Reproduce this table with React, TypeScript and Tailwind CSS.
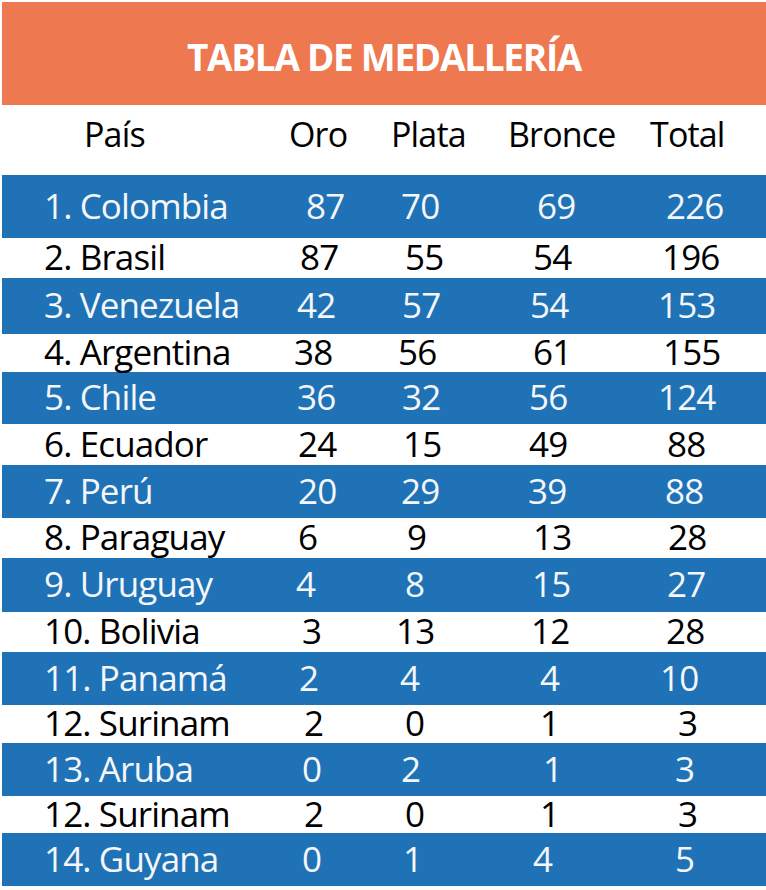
type Row = {
  name: string;
  h: number;
  cells: [string, number][];
};

// x positions measured from the left of the page for each number
const rows: Row[] = [
  { name: '1. Colombia', h: 63, cells: [['87', 306], ['70', 401], ['69', 537], ['226', 666]] },
  { name: '2. Brasil', h: 40, cells: [['87', 300], ['55', 405], ['54', 533], ['196', 662]] },
  { name: '3. Venezuela', h: 56, cells: [['42', 297], ['57', 402], ['54', 530], ['153', 658]] },
  { name: '4. Argentina', h: 38, cells: [['38', 294], ['56', 398], ['61', 533], ['155', 663]] },
  { name: '5. Chile', h: 52, cells: [['36', 297], ['32', 402], ['56', 529], ['124', 658]] },
  { name: '6. Ecuador', h: 41, cells: [['24', 298], ['15', 403], ['49', 529], ['88', 667]] },
  { name: '7. Perú', h: 53, cells: [['20', 298], ['29', 401], ['39', 528], ['88', 665]] },
  { name: '8. Paraguay', h: 40, cells: [['6', 298], ['9', 407], ['13', 533], ['28', 668]] },
  { name: '9. Uruguay', h: 54, cells: [['4', 296], ['8', 405], ['15', 532], ['27', 667]] },
  { name: '10. Bolivia', h: 40, cells: [['3', 302], ['13', 396], ['12', 531], ['28', 666]] },
  { name: '11. Panamá', h: 53, cells: [['2', 299], ['4', 400], ['4', 540], ['10', 660]] },
  { name: '12. Surinam', h: 38, cells: [['2', 304], ['0', 405], ['1', 540], ['3', 678]] },
  { name: '13. Aruba', h: 53, cells: [['0', 302], ['2', 401], ['1', 543], ['3', 675]] },
  { name: '12. Surinam', h: 37, cells: [['2', 304], ['0', 405], ['1', 540], ['3', 678]] },
  { name: '14. Guyana', h: 53, cells: [['0', 302], ['1', 403], ['4', 533], ['5', 675]] },
];

const colStart = [285, 390, 520, 650];
const colWidth = [105, 130, 130, 116];

const font = { fontFamily: '"Open Sans", "Noto Sans", sans-serif' };

export default function App() {
  return (
    <div className="w-[766px] h-[890px] bg-white pt-[2px] pl-[2px] overflow-hidden" style={font}>
      <div className="h-[103px] bg-[#ee7850] flex items-center justify-center pt-[6px]">
        <h1 className="text-white font-bold text-[37px] tracking-[-0.035em] leading-none">
          TABLA DE MEDALLERÍA
        </h1>
      </div>

      <div className="h-[70px] flex items-center pb-[13px] text-black text-[34px] tracking-[-0.025em] leading-none">
        <div className="w-[283px] pl-[82px]">País</div>
        <div className="w-[105px] pl-[4px]">Oro</div>
        <div className="w-[130px] pl-[1px]">Plata</div>
        <div className="w-[130px] -ml-[12px]">Bronce</div>
        <div className="w-[116px] pl-[12px]">Total</div>
      </div>

      {rows.map((r, i) => {
        const blue = i % 2 === 0;
        return (
          <div
            key={i}
            className={
              'flex items-center pb-[3px] text-[35px] tracking-[-0.025em] leading-none ' +
              (blue ? 'bg-[#1f72b6] text-[#f4f6f9]' : 'bg-white text-black')
            }
            style={{ height: r.h }}
          >
            <div className="w-[283px] pl-[42px] whitespace-nowrap">{r.name}</div>
            {r.cells.map(([v, x], j) => (
              <div
                key={j}
                className="whitespace-nowrap"
                style={{ width: colWidth[j], paddingLeft: x - colStart[j] }}
              >
                {v}
              </div>
            ))}
          </div>
        );
      })}
    </div>
  );
}
